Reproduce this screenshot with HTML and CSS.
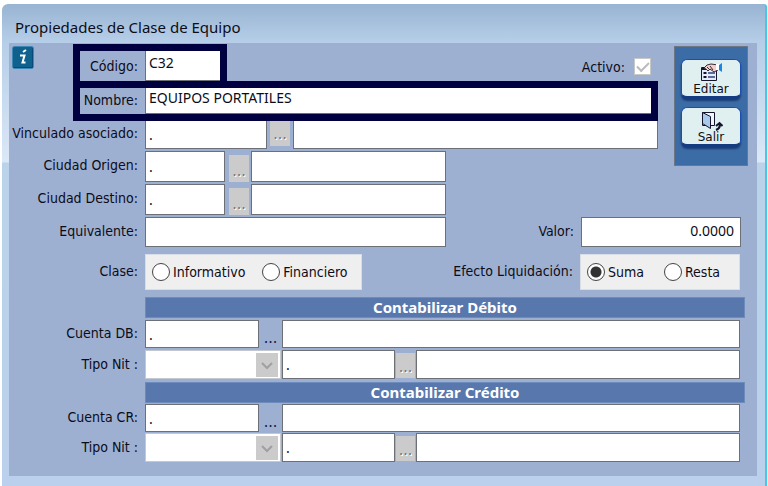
FILE: index.html
```
<!DOCTYPE html>
<html lang="es">
<head>
<meta charset="utf-8">
<title>Propiedades de Clase de Equipo</title>
<link rel="stylesheet" href="styles.css">
</head>
<body>
<div class="window">
<h1 class="titlebar">Propiedades de Clase de Equipo</h1>
<form class="panel">

<div class="top">
	<div class="datos">
		<div class="row first">
			<svg class="info" width="22" height="23" viewBox="0 0 22 23" role="img" aria-label="Información">
				<rect x="0.5" y="0.5" width="21" height="22" rx="2" fill="#0f628e" stroke="#3f87b4"/>
				<path d="M1.5 21.5h19v-19" fill="none" stroke="#0b4a78"/>
				<path d="M11 6l3-2" stroke="#fff" stroke-width="2" fill="none"/>
				<path d="M8 9.500h4.500l-2 7h3" stroke="#fff" stroke-width="2" fill="none"/>
			</svg>
			<div class="marca codigo">
				<label for="codigo">Código:</label>
				<input type="text" id="codigo" value="C32">
			</div>
			<label class="activo">Activo: <input type="checkbox" checked disabled></label>
		</div>
		<div class="marca nombre">
			<label for="nombre">Nombre:</label>
			<input type="text" id="nombre" value="EQUIPOS PORTATILES">
		</div>
		<div class="row vinculado">
			<label for="vinc">Vinculado asociado:</label>
			<input type="text" id="vinc" class="w122" value=".">
			<button type="button" class="dots" disabled>...</button>
			<input type="text" class="fill" aria-label="Nombre del vinculado">
		</div>
		<div class="row ciudad">
			<label for="origen">Ciudad Origen:</label>
			<input type="text" id="origen" class="w80" value=".">
			<button type="button" class="dots low" disabled>...</button>
			<input type="text" class="w195" aria-label="Nombre ciudad origen">
		</div>
		<div class="row ciudad">
			<label for="destino">Ciudad Destino:</label>
			<input type="text" id="destino" class="w80" value=".">
			<button type="button" class="dots low" disabled>...</button>
			<input type="text" class="w195" aria-label="Nombre ciudad destino">
		</div>
	</div>

	<div class="toolbar">
		<button type="button">
			<svg width="24" height="19" viewBox="0 0 24 19" aria-hidden="true">
				<path d="M2.500 4.500h15v13h-15z" fill="#e4ecfa" stroke="#14142c"/>
				<path d="M3 6h14" stroke="#14142c" stroke-width="2"/>
				<path d="M4.500 10h3M4.500 14h3" stroke="#14142c" stroke-width="2"/>
				<path d="M9 10h7M9 14h7" stroke="#5b6a98" stroke-width="2"/>
				<path d="M5 5l3-3 4-1 7 1v5l-4 2-4-3-2 2-2-2z" fill="#f5cfc6" stroke="#3a2a38"/>
				<path d="M8 4l3 3M11 3l3 4" stroke="#3a2a38"/>
				<path d="M17 1h4v6h-4z" fill="#fff"/>
				<path d="M20 2l3-2v9l-3-2z" fill="#1c86e6"/>
			</svg>
			Editar
		</button>
		<button type="button">
			<svg class="puerta" width="24" height="22" viewBox="0 0 24 22" aria-hidden="true">
				<path d="M3.500 1.500h12v13h-12z" fill="#eef5fb" stroke="#14142c"/>
				<path d="M3.500 1.500l8 4v12l-8-5z" fill="#a9c8ea" stroke="#14142c"/>
				<path d="M17 15l3.500-3 3 3M20.500 13c1 3-1 5-3.500 6" fill="none" stroke="#14142c" stroke-width="2"/>
			</svg>
			Salir
		</button>
	</div>
</div>

<div class="row equivalente">
	<label for="equiv">Equivalente:</label>
	<input type="text" id="equiv" class="w301">
	<label for="valor" class="derecha">Valor:</label>
	<input type="text" id="valor" class="w160 num" value="0.0000">
</div>

<div class="row clase">
	<span class="label" id="lclase">Clase:</span>
	<div class="radios r1" role="radiogroup" aria-labelledby="lclase">
		<label><input type="radio" name="clase">Informativo</label>
		<label><input type="radio" name="clase">Financiero</label>
	</div>
	<span class="label derecha" id="lefecto">Efecto Liquidación:</span>
	<div class="radios r2" role="radiogroup" aria-labelledby="lefecto">
		<label><input type="radio" name="efecto" checked>Suma</label>
		<label><input type="radio" name="efecto">Resta</label>
	</div>
</div>

<h2>Contabilizar Débito</h2>
<div class="row cuenta">
	<label for="cdb">Cuenta DB:</label>
	<input type="text" id="cdb" class="w114" value=".">
	<button type="button" class="plain">...</button>
	<input type="text" class="fill" aria-label="Nombre cuenta DB">
</div>
<div class="row nit">
	<label for="nitdb">Tipo Nit :</label>
	<div class="combo"><select id="nitdb" disabled><option></option></select><svg width="22" height="24" viewBox="0 0 22 24" aria-hidden="true"><path d="M6 10l5 5 5-5"/></svg></div>
	<input type="text" class="w113" value="." aria-label="Nit débito">
	<button type="button" class="dots" disabled>...</button>
	<input type="text" class="fill" aria-label="Nombre nit débito">
</div>

<h2>Contabilizar Crédito</h2>
<div class="row cuenta">
	<label for="ccr">Cuenta CR:</label>
	<input type="text" id="ccr" class="w114" value=".">
	<button type="button" class="plain">...</button>
	<input type="text" class="fill" aria-label="Nombre cuenta CR">
</div>
<div class="row nit">
	<label for="nitcr">Tipo Nit :</label>
	<div class="combo"><select id="nitcr" disabled><option></option></select><svg width="22" height="24" viewBox="0 0 22 24" aria-hidden="true"><path d="M6 10l5 5 5-5"/></svg></div>
	<input type="text" class="w113" value="." aria-label="Nit crédito">
	<button type="button" class="dots" disabled>...</button>
	<input type="text" class="fill" aria-label="Nombre nit crédito">
</div>

</form>
</div>
</body>
</html>
```
FILE: styles.css
```
*{
	box-sizing:border-box;
}
body{
	margin:0;
	padding:4px 1px 0 2px;
	background:#fff;
	color:#0c0c18;
	font-family:Tahoma, "DejaVu Sans Condensed", sans-serif;
	font-size:14px;
}
.window{
	padding:0 8px 9px 7px;
	min-height:calc(100vh - 4px);
	border-right:2px solid #4cc4e4;
	border-radius:6px 3px 0 0;
	background:linear-gradient(#98b4d2 0, #b6cee8 38px, #dbe8f7 158px, #bad3ea 159px, #bad0ec 100%);
}
.titlebar{
	margin:0;
	padding:9px 6px 0;
	height:39px;
	font:15px/28px "Noto Sans", sans-serif;
}
.panel{
	padding:1px 0 14px;
	background:#9eb0d1;
}
.top{
	display:flex;
	align-items:flex-start;
	padding-right:9px;
}
.datos{
	flex:1;
	min-width:0;
}

input, select, button{
	font-family:inherit;
	min-width:0;
	margin:0;
}
input[type=text]{
	height:100%;
	padding:0 3px;
	border:1px solid #6e7078;
	border-radius:0;
	background:#fff;
	color:#0c0c18;
	font:14px "Noto Sans", sans-serif;
}
.row{
	display:flex;
	align-items:center;
}
.row > label:first-child, .row > .label:first-child{
	width:129px;
	margin-right:7px;
	padding-bottom:2px;
	text-align:right;
	white-space:nowrap;
}
.fill{
	flex:1;
}
.w80{width:80px;}
.w113{width:113px;}
.w114{width:114px;}
.w122{width:122px;}
.w160{width:160px;}
.w195{width:195px;}
.w301{width:301px;}

/* campos resaltados */
.marca{
	display:flex;
	align-items:center;
	border:7px solid #000040;
}
.marca label{
	width:58px;
	margin-right:7px;
	text-align:right;
}
.marca input[type=text]{
	flex:1;
	border-width:0 0 1px 1px;
	padding-bottom:6px;
}
.codigo{
	width:154px;
	height:37px;
	margin-left:39px;
	border-bottom:0;
}
.nombre{
	height:40px;
	margin-left:64px;
}
.nombre label{
	padding-bottom:2px;
}
.info{
	margin:2px 0 0 3px;
	align-self:flex-start;
}
.activo{
	display:flex;
	align-items:center;
	gap:9px;
	margin:8px 7px 0 auto;
}
.activo input{
	appearance:none;
	width:17px;
	height:17px;
	border:1px solid #c8c8c8;
	background:#fff;
	display:grid;
	place-items:center;
}
.activo input:checked::before{
	content:"";
	width:10px;
	height:5px;
	margin-bottom:3px;
	border:solid #bbb;
	border-width:0 0 2px 2px;
	transform:rotate(-45deg);
}

.vinculado{
	height:28px;
}
.vinculado > label:first-child{
	padding-bottom:4px;
}
.vinculado input[type=text]{
	border-top:0;
}
.ciudad{
	height:31px;
	margin-top:2px;
}
.ciudad > label:first-child{
	padding-bottom:4px;
}
.dots, .plain{
	width:20px;
	padding:0;
	border:0;
	background:#cbcbcb;
	color:#77777e;
	font-size:16px;
	line-height:20px;
	text-shadow:1px 1px #fff;
}
.dots{
	align-self:flex-start;
	height:25px;
	margin:0 3px;
}
.dots.low{
	align-self:flex-end;
	height:27px;
	margin:0 2px 0 4px;
	padding-top:5px;
}
.plain{
	height:100%;
	width:23px;
	padding-top:8px;
	background:none;
	color:#14143c;
	text-shadow:none;
}

.toolbar{
	display:flex;
	flex-direction:column;
	gap:8px;
	width:74px;
	height:120px;
	margin:2px 0 0 16px;
	padding:12px 6px;
	border:1px solid #6f7683;
	background:#3b6ca5;
}
.toolbar button{
	display:flex;
	flex-direction:column;
	align-items:center;
	height:40px;
	padding:3px 0 0;
	border:1px solid #1d4db0;
	border-bottom:3px solid #143c80;
	border-radius:6px;
	background:#e0f0f0;
	color:#101018;
	font:12px/14px "DejaVu Sans", sans-serif;
	box-shadow:0 2px 2px #1c3c74;
}
.toolbar svg{
	flex:none;
}
.toolbar .puerta{
	margin-bottom:-3px;
}

.equivalente{
	height:30px;
	margin:2px 16px 0 0;
}
.equivalente > label, .clase > .label{
	padding-bottom:2px;
}
.derecha{
	margin:0 7px 0 auto;
}
.num{
	text-align:right;
}
.equivalente .num{
	padding:0 6px 4px;
}
.clase{
	margin:7px 17px 0 0;
}
.radios{
	display:flex;
	align-items:center;
	height:36px;
	padding-left:6px;
	border:1px solid #d9dde6;
	background:#efefef;
}
.r1{
	width:217px;
	gap:17px;
}
.r2{
	width:160px;
	gap:20px;
}
.radios label{
	display:flex;
	align-items:center;
	gap:3px;
}
.radios input{
	appearance:none;
	width:18px;
	height:18px;
	border:1px solid #444;
	border-radius:50%;
	background:#fff;
}
.radios input:checked{
	background:radial-gradient(circle, #333 5px, #fff 6px);
}

h2{
	margin:7px 12px 0 136px;
	height:21px;
	border:1px solid #6e8bbd;
	background:#5877ad;
	color:#fff;
	font:bold 15px/19px "Noto Sans", sans-serif;
	text-align:center;
}
.cuenta{
	height:28px;
	margin:2px 17px 0 0;
}
.nit{
	height:29px;
	margin:2px 17px 0 0;
}
.nit + h2{
	margin-top:3px;
}
.nit + h2 + .cuenta, .nit + h2 + .cuenta + .nit{
	margin-top:1px;
}
.combo{
	display:flex;
	align-items:center;
	width:136px;
	height:100%;
	margin-right:1px;
	padding-right:2px;
	border:1px solid #c4c8d0;
	background:#fff;
}
.combo select{
	flex:1;
	height:100%;
	appearance:none;
	border:0;
	background:#fff;
}
.combo svg{
	background:#cbcbcb;
	fill:none;
	stroke:#a0a0a0;
	stroke-width:2;
}
.nit .dots{
	width:19px;
	margin:3px 1px 0;
	padding-top:3px;
}
```
